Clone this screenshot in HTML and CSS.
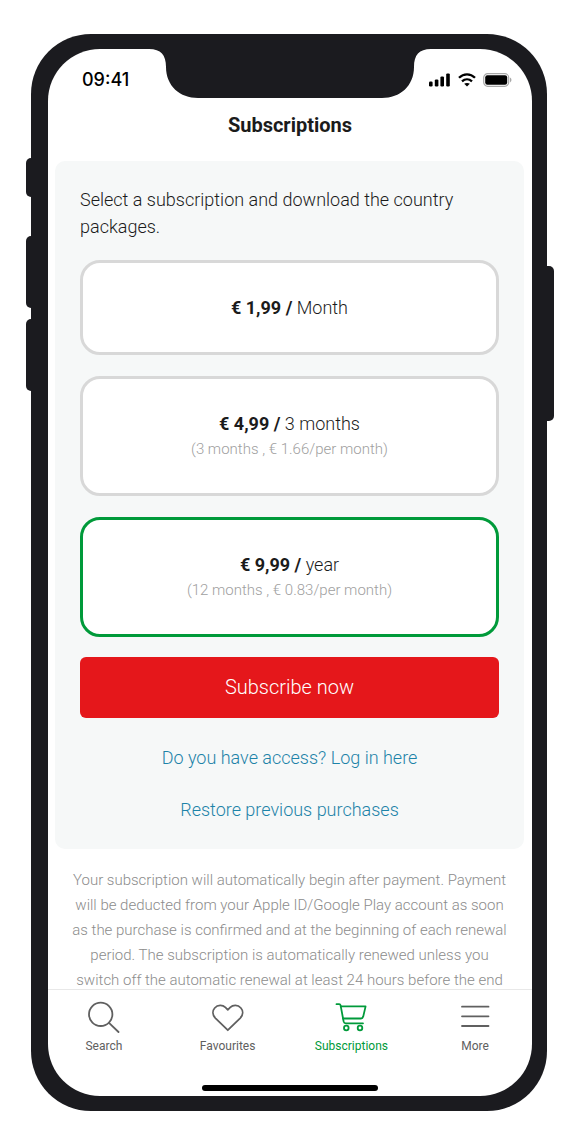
FILE: index.html
```html
<!DOCTYPE html>
<html lang="en">
<head>
    <meta charset="UTF-8">
    <meta name="viewport" content="width=device-width, initial-scale=1.0">
    <title>Subscriptions</title>
    <link rel="stylesheet" href="styles.css">
</head>
<body>

    <div class="phone">
        <span class="side-button mute"></span>
        <span class="side-button volume-up"></span>
        <span class="side-button volume-down"></span>
        <span class="side-button power"></span>

        <div class="screen">
            <div class="status-bar">
                <svg class="notch" viewBox="0 0 282 49" aria-hidden="true">
                    <path d="M0 0C12 0 17 6 17 18C17 37 31 49 49 49H233C251 49 265 37 265 18C265 6 270 0 282 0Z" fill="#1b1b1f"/>
                </svg>
                <span class="time">09:41</span>
                <span class="status-icons">
                    <svg width="22" height="14" viewBox="0 0 22 14" aria-hidden="true">
                        <rect x="0" y="8.6" width="3.6" height="4.8" rx="1.2"/>
                        <rect x="5.8" y="6.4" width="3.6" height="7" rx="1.2"/>
                        <rect x="11.4" y="3.4" width="3.6" height="10" rx="1.2"/>
                        <rect x="17.2" y=".4" width="3.6" height="13" rx="1.2"/>
                    </svg>
                    <svg width="18" height="14" viewBox="0 0 18 14" aria-hidden="true">
                        <path d="M1 4.8C5.6 .2 12.4 .2 17 4.8M4 8.4C7 5.6 11 5.6 14 8.4" fill="none" stroke="#000" stroke-width="2.3"/>
                        <path d="M9 13.4L6.2 10.8C7.6 9.6 10.4 9.6 11.8 10.8Z"/>
                    </svg>
                    <svg width="29" height="14" viewBox="0 0 29 14" aria-hidden="true">
                        <rect x=".7" y=".7" width="25" height="12.6" rx="4" fill="none" stroke="#a8a8a8" stroke-width="1.2"/>
                        <rect x="2.2" y="2.2" width="22" height="9.6" rx="2.2"/>
                        <path d="M27 4.6C29 5.6 29 8.4 27 9.4Z" fill="#a8a8a8"/>
                    </svg>
                </span>
            </div>

            <header>
                <h1>Subscriptions</h1>
            </header>

            <main>
                <form class="card">
                    <fieldset class="plans">
                        <legend>Select a subscription and download the country packages.</legend>
                        <label class="plan">
                            <input type="radio" name="plan" value="month">
                            <span class="price"><b>€ 1,99 /</b> Month</span>
                        </label>
                        <label class="plan">
                            <input type="radio" name="plan" value="quarter">
                            <span class="price"><b>€ 4,99 /</b> 3 months</span>
                            <span class="note">(3 months , € 1.66/per month)</span>
                        </label>
                        <label class="plan">
                            <input type="radio" name="plan" value="year" checked>
                            <span class="price"><b>€ 9,99 /</b> year</span>
                            <span class="note">(12 months , € 0.83/per month)</span>
                        </label>
                    </fieldset>
                    <button class="subscribe" type="submit">Subscribe now</button>
                    <div class="links">
                        <a href="#login">Do you have access? Log in here</a>
                        <a href="#restore">Restore previous purchases</a>
                    </div>
                </form>
                <p class="terms">Your subscription will automatically begin after payment. Payment will be deducted from your Apple ID/Google Play account as soon as the purchase is confirmed and at the beginning of each renewal period. The subscription is automatically renewed unless you switch off the automatic renewal at least 24 hours before the end</p>
            </main>

            <nav>
                <a href="#search">
                    <svg viewBox="0 0 32 32" aria-hidden="true">
                        <circle cx="12.7" cy="13.3" r="11.7"/>
                        <path d="M21 21.8L30.5 31"/>
                    </svg>
                    Search
                </a>
                <a href="#favourites">
                    <svg viewBox="0 0 32 32" aria-hidden="true">
                        <path d="M15.8 29.2L3.6 17.4C.3 14 .3 9.8 2.7 7C5.8 3.6 10.6 3.8 13.4 6.4L15.8 8.8L18.2 6.4C21 3.8 25.8 3.6 28.9 7C31.3 9.8 31.3 14 28 17.4Z"/>
                    </svg>
                    Favourites
                </a>
                <a class="active" href="#subscriptions">
                    <svg viewBox="0 0 32 32" aria-hidden="true">
                        <path d="M1.5 3.2H4.2C5 3.2 5.4 3.6 5.6 4.4L8.6 20.4C8.9 21.7 9.6 22.3 10.8 22.3H28"/>
                        <path d="M5.8 5.4H30.6L28.2 15.6C27.8 17 27.2 17.5 26 17.5H8"/>
                        <circle cx="11.3" cy="27" r="2.3"/>
                        <circle cx="25" cy="27" r="2.3"/>
                    </svg>
                    Subscriptions
                </a>
                <a href="#more">
                    <svg viewBox="0 0 32 32" aria-hidden="true">
                        <path d="M3 5.7H29.5M3 15.3H29.5M3 25H29.5"/>
                    </svg>
                    More
                </a>
            </nav>
            <div class="home-bar"></div>
        </div>
    </div>

</body>
</html>
```
FILE: styles.css
```css
* {
    box-sizing: border-box;
}
body {
    font-family: Roboto, "Liberation Sans", sans-serif;
    font-weight: 300;
    background-color: white;
    color: #1b1b1b;
    margin: 0;
    padding: 34px 29px 35px 31px;
}

/* Device frame */
.phone {
    position: relative;
    height: calc(100vh - 69px);
    padding: 15px 15px 15px 17px;
    background-color: #1b1b1f;
    border-radius: 60px;
}
.side-button {
    position: absolute;
    left: -5px;
    width: 8px;
    background-color: #1b1b1f;
    border-radius: 5px 0 0 5px;
}
.mute {
    top: 124px;
    height: 39px;
}
.volume-up {
    top: 202px;
    height: 72px;
}
.volume-down {
    top: 285px;
    height: 72px;
}
.power {
    top: 232px;
    left: auto;
    right: -7px;
    width: 10px;
    height: 155px;
    border-radius: 0 5px 5px 0;
}
.screen {
    display: flex;
    flex-direction: column;
    height: 100%;
    overflow: hidden;
    background-color: white;
    border-radius: 52px;
}

/* Status bar */
.status-bar {
    position: relative;
    display: flex;
    flex: none;
    justify-content: space-between;
    align-items: center;
    height: 49px;
    padding: 12px 20px 0 34px;
    color: black;
}
.notch {
    position: absolute;
    top: 0;
    left: calc(50% - 141px);
    width: 282px;
    height: 49px;
}
.time {
    font-family: Inter, sans-serif;
    font-size: 18px;
    font-weight: 500;
}
.status-icons {
    position: relative;
    display: flex;
    align-items: center;
    gap: 7px;
}

header {
    flex: none;
    text-align: center;
}
h1 {
    margin: 0;
    font-size: 20px;
    font-weight: 700;
    line-height: 54px;
}

main {
    flex: 1;
    min-height: 0;
    padding: 9px 8px 0 7px;
}
.card {
    padding: 25px 25px 26px;
    background-color: #f6f8f8;
    border-radius: 10px;
}
.plans {
    display: flex;
    flex-direction: column;
    gap: 21px;
    min-width: 0;
    margin: 0;
    padding: 0;
    border: 0;
}
.plans legend {
    margin-bottom: 20px;
    padding: 0;
    font-size: 18px;
    line-height: 27px;
}
.plan {
    position: relative;
    display: flex;
    flex-direction: column;
    align-items: center;
    padding: 31px 20px;
    background-color: white;
    border: 3px solid #d8d8d8;
    border-radius: 20px;
    cursor: pointer;
}
.plan:has(input:checked) {
    border-color: #009a3a;
}
.plan input {
    position: absolute;
    opacity: 0;
}
.price {
    font-size: 18px;
    line-height: 27px;
}
.price b {
    font-weight: 700;
}
.note {
    color: #a0a0a0;
    font-size: 15px;
    line-height: 25px;
}
.subscribe {
    width: 100%;
    margin-top: 20px;
    padding: 0;
    background-color: #e5171b;
    border: none;
    border-radius: 6px;
    color: white;
    font-family: inherit;
    font-size: 20px;
    font-weight: 300;
    line-height: 61px;
    cursor: pointer;
}
.links {
    display: flex;
    flex-direction: column;
    align-items: center;
    gap: 25px;
    margin-top: 26px;
}
.links a {
    color: #1d83a8;
    font-size: 18px;
    line-height: 27px;
    text-decoration: none;
}
.terms {
    margin: 19px 13px 0;
    color: #8c8c8c;
    font-size: 15px;
    line-height: 25px;
    text-align: center;
}

/* Tab bar */
nav {
    display: grid;
    flex: none;
    grid-template-columns: repeat(4, 1fr);
    margin: 0 -5px 0 -6px;
    padding-top: 11px;
    border-top: 1px solid #e8e8e8;
}
nav a {
    display: flex;
    flex-direction: column;
    align-items: center;
    gap: 5px;
    color: #606060;
    font-size: 12px;
    font-weight: 400;
    line-height: 16px;
    text-decoration: none;
}
nav svg {
    width: 32px;
    height: 32px;
    fill: none;
    stroke: currentColor;
    stroke-width: 1.8;
    stroke-linecap: round;
    stroke-linejoin: round;
}
nav .active {
    color: #009a3a;
}
.home-bar {
    flex: none;
    width: 176px;
    height: 6px;
    margin: 31px auto 5px;
    background-color: black;
    border-radius: 3px;
}
```
